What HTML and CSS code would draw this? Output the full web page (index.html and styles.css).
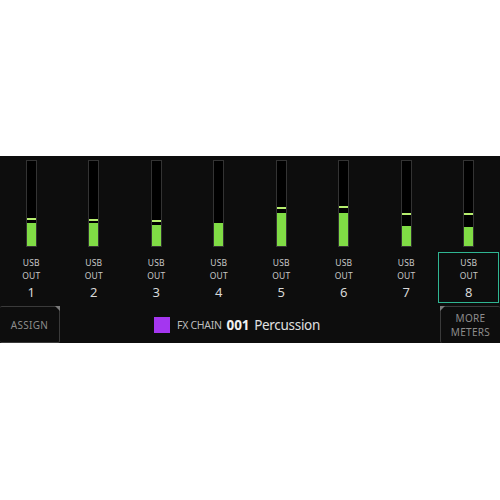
FILE: index.html
```html
<!DOCTYPE html>
<html>
<head>
<meta charset="utf-8">
<link rel="stylesheet" href="styles.css">
</head>
<body>
<div class="page">
  <div class="panel">
    <div class="meters">
      <div class="ch"><div class="meter"><div class="peak" style="bottom:26px"></div><div class="fill" style="height:23px"></div></div><div class="lbl"><span>USB</span><span>OUT</span></div><div class="num">1</div></div>
      <div class="ch"><div class="meter"><div class="peak" style="bottom:25px"></div><div class="fill" style="height:23px"></div></div><div class="lbl"><span>USB</span><span>OUT</span></div><div class="num">2</div></div>
      <div class="ch"><div class="meter"><div class="peak" style="bottom:24px"></div><div class="fill" style="height:21px"></div></div><div class="lbl"><span>USB</span><span>OUT</span></div><div class="num">3</div></div>
      <div class="ch"><div class="meter"><div class="fill" style="height:23px"></div></div><div class="lbl"><span>USB</span><span>OUT</span></div><div class="num">4</div></div>
      <div class="ch"><div class="meter"><div class="peak" style="bottom:37px"></div><div class="fill" style="height:33px"></div></div><div class="lbl"><span>USB</span><span>OUT</span></div><div class="num">5</div></div>
      <div class="ch"><div class="meter"><div class="peak" style="bottom:38px"></div><div class="fill" style="height:33px"></div></div><div class="lbl"><span>USB</span><span>OUT</span></div><div class="num">6</div></div>
      <div class="ch"><div class="meter"><div class="peak" style="bottom:31px"></div><div class="fill" style="height:20px"></div></div><div class="lbl"><span>USB</span><span>OUT</span></div><div class="num">7</div></div>
      <div class="ch sel"><div class="meter"><div class="peak" style="bottom:31px"></div><div class="fill" style="height:19px"></div></div><div class="lbl"><span>USB</span><span>OUT</span></div><div class="num">8</div></div>
    </div>
    <div class="bottom">
      <div class="btn btn-left">ASSIGN</div>
      <div class="chain">
        <span class="swatch"></span>
        <span class="chain-label">FX CHAIN</span>
        <span class="chain-num">001</span>
        <span class="chain-name">Percussion</span>
      </div>
      <div class="btn btn-right">MORE<br>METERS</div>
    </div>
  </div>
</div>
</body>
</html>
```
FILE: styles.css
```css
html, body { margin: 0; padding: 0; background: #fff; }
body { font-family: "Noto Sans", "Open Sans", sans-serif; }
.page { width: 500px; height: 500px; padding-top: 156px; box-sizing: border-box; }
.panel { width: 500px; height: 187px; background: #0d0d0d; display: flex; flex-direction: column; }
.meters { display: grid; grid-template-columns: repeat(8, 1fr); height: 150px; }
.ch { display: flex; flex-direction: column; align-items: center; padding-top: 4px; box-sizing: border-box; }
.meter { position: relative; width: 9px; height: 85px; border: 1px solid #333; background: #000; }
.fill { position: absolute; left: 0; right: 0; bottom: 0; background: #80dc45; }
.peak { position: absolute; left: 0; right: 0; height: 2px; background: #b6ee6e; }
.lbl { display: flex; flex-direction: column; align-items: center; margin-top: 9px; font-size: 8.5px; line-height: 13px; color: #c8c8c8; letter-spacing: 0.2px; }
.num { font-size: 13px; line-height: 18px; color: #d8d8d8; margin-top: 1px; }
.sel { position: relative; }
.sel::after { content: ""; position: absolute; left: 0; right: 1px; top: 96px; height: 51px; border: 1px solid #2fb592; box-sizing: border-box; pointer-events: none; }
.bottom { display: flex; align-items: stretch; height: 37px; }
.btn { position: relative; width: 60px; box-sizing: border-box; border: 1px solid #3a3a3a; border-radius: 2px; color: #8c8c8c; font-size: 10px; display: flex; align-items: center; justify-content: center; text-align: center; line-height: 14px; letter-spacing: 0.3px; }
.btn-left { border-left: none; }
.btn-right { border-right: none; border-bottom: none; margin-left: auto; }
.btn-left::after { content: ""; position: absolute; top: -1px; right: -1px; width: 0; height: 0; border-top: 5px solid #7a7a7a; border-left: 5px solid transparent; }
.btn-right::before { content: ""; position: absolute; top: -1px; left: -1px; width: 0; height: 0; border-top: 5px solid #7a7a7a; border-right: 5px solid transparent; }
.chain { display: flex; align-items: center; margin-left: 94px; }
.swatch { width: 16px; height: 16px; background: #a436f0; margin-right: 7px; }
.chain-label { font-size: 10.5px; color: #bdbdbd; margin-right: 5px; letter-spacing: -0.3px; }
.chain-num { font-size: 13.5px; font-weight: 700; color: #f0f0f0; margin-right: 5px; letter-spacing: -0.2px; }
.chain-name { font-size: 13.5px; color: #e0e0e0; letter-spacing: -0.3px; }
```
